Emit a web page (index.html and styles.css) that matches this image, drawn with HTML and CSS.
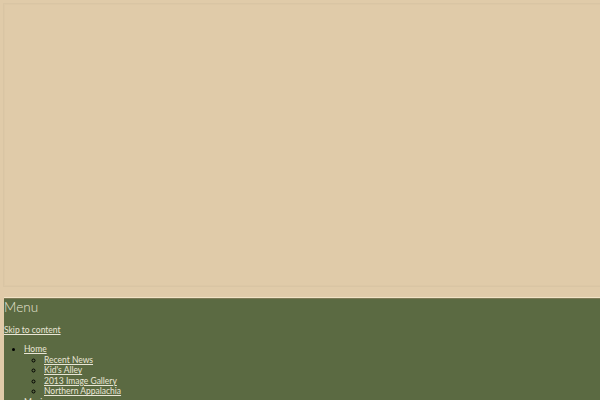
FILE: index.html
```html
<!DOCTYPE html>
<html>
<head>
<meta charset="utf-8">
<link rel="stylesheet" href="styles.css">
</head>
<body>
<div class="page">
  <div class="banner"></div>
  <nav class="menu">
    <h2 class="menu-title">Menu</h2>
    <a class="skip" href="#">Skip to content</a>
    <ul class="nav-list">
      <li><a href="#">Home</a>
        <ul>
          <li><a href="#">Recent News</a></li>
          <li><a href="#">Kid's Alley</a></li>
          <li><a href="#">2013 Image Gallery</a></li>
          <li><a href="#">Northern Appalachia</a></li>
        </ul>
      </li>
      <li><a href="#">Music</a></li>
    </ul>
  </nav>
</div>
</body>
</html>
```
FILE: styles.css
```css
html, body {
  margin: 0;
  padding: 0;
  background: #e0cba9;
  overflow: hidden;
}
.page {
  padding: 3px 0 0 3px;
  width: 700px;
}
.banner {
  height: 282px;
  border: 1px solid #d9c5a4;
  border-right: none;
  box-shadow: inset 0 0 0 1px #ddc8a6;
}
.menu {
  margin-top: 10px;
  margin-left: 1px;
  background: #5b6a42;
  border-top: 1px solid #f1e3c6;
  box-shadow: inset 0 1px 0 #7d7a55;
  color: #e9e6d6;
  font-family: "Lato", "Open Sans", sans-serif;
  padding: 1px 0 10px 0;
  height: 200px;
}
.menu-title {
  margin: 0;
  font-weight: 300;
  font-size: 13.5px;
  line-height: 16px;
  letter-spacing: 0.1px;
}
.skip {
  display: inline-block;
  margin-top: 10px;
  font-size: 8.5px;
  line-height: 11px;
  color: #e9e6d6;
}
.nav-list {
  margin: 8px 0 0 0;
  padding-left: 20px;
  font-size: 8.5px;
  line-height: 10.5px;
  color: #000;
}
.nav-list ul {
  margin: 0;
  padding-left: 20px;
  list-style: circle;
}
.nav-list a {
  color: #e9e6d6;
}
```
